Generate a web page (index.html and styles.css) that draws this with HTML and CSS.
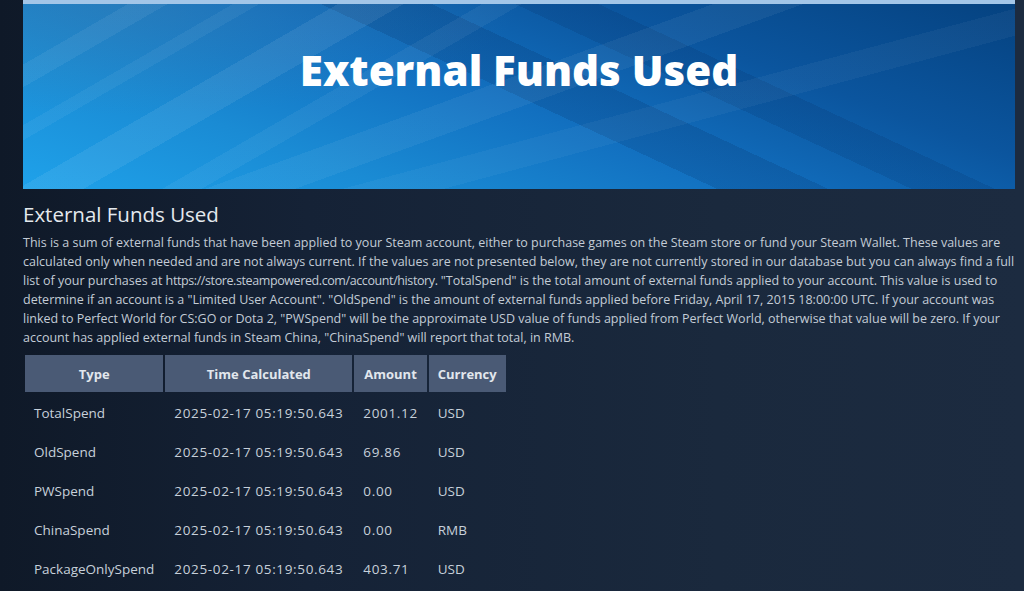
FILE: index.html
```html
<!DOCTYPE html>
<html lang="en">
<head>
  <meta charset="UTF-8">
  <meta name="viewport" content="width=device-width, initial-scale=1">
  <title>External Funds Used</title>
  <link rel="stylesheet" href="styles.css">
</head>
<body>

  <div class="page">
    <!-- Banner -->
    <div class="banner">
      <h1 class="banner-title">External Funds Used</h1>
    </div>

    <!-- Description -->
    <h2 class="section-title">External Funds Used</h2>
    <p class="section-desc">This is a sum of external funds that have been applied to your Steam account, either to purchase games on the Steam store or fund your Steam Wallet. These values are calculated only when needed and are not always current. If the values are not presented below, they are not currently stored in our database but you can always find a full list of your purchases at <span class="url">https://store.steampowered.com/account/history.</span> "TotalSpend" is the total amount of external funds applied to your account. This value is used to determine if an account is a "Limited User Account". "OldSpend" is the amount of external funds applied before Friday, April 17, 2015 18:00:00 UTC. If your account was linked to Perfect World for CS:GO or Dota 2, "PWSpend" will be the approximate USD value of funds applied from Perfect World, otherwise that value will be zero. If your account has applied external funds in Steam China, "ChinaSpend" will report that total, in RMB.</p>

    <!-- Tabel dana -->
    <table class="funds">
      <thead>
        <tr>
          <th>Type</th>
          <th>Time Calculated</th>
          <th>Amount</th>
          <th>Currency</th>
        </tr>
      </thead>
      <tbody>
        <tr><td>TotalSpend</td><td class="num">2025-02-17 05:19:50.643</td><td class="num">2001.12</td><td>USD</td></tr>
        <tr><td>OldSpend</td><td class="num">2025-02-17 05:19:50.643</td><td class="num">69.86</td><td>USD</td></tr>
        <tr><td>PWSpend</td><td class="num">2025-02-17 05:19:50.643</td><td class="num">0.00</td><td>USD</td></tr>
        <tr><td>ChinaSpend</td><td class="num">2025-02-17 05:19:50.643</td><td class="num">0.00</td><td>RMB</td></tr>
        <tr><td>PackageOnlySpend</td><td class="num">2025-02-17 05:19:50.643</td><td class="num">403.71</td><td>USD</td></tr>
      </tbody>
    </table>
  </div>

</body>
</html>
```

FILE: styles.css
```css
/* Reset dan Style Global */
* {
  margin: 0;
  padding: 0;
  box-sizing: border-box;
}
body {
  font-family: 'Open Sans', 'Noto Sans', sans-serif;
  background: linear-gradient(90deg, #0f1928 0%, #152236 30%, #1a293d 70%, #1c2b40 100%);
  color: #c6d0da;
  height: 100vh;
  overflow: hidden;
}
.page {
  width: 992px;
  margin-left: 23px;
}
/* Banner */
.banner {
  height: 189px;
  border-top: 4px solid #a3c6e8;
  padding-top: 45px;
  text-align: center;
  background:
    /* garis terang miring */
    linear-gradient(150deg, transparent 8%, rgba(255, 255, 255, 0.06) 8%, rgba(255, 255, 255, 0.06) 11%, transparent 11%),
    linear-gradient(150deg, transparent 16%, rgba(255, 255, 255, 0.05) 16%, rgba(255, 255, 255, 0.05) 18%, transparent 18%),
    linear-gradient(150deg, transparent 24%, rgba(255, 255, 255, 0.07) 24%, rgba(255, 255, 255, 0.07) 29%, transparent 29%),
    linear-gradient(150deg, transparent 35%, rgba(255, 255, 255, 0.05) 35%, rgba(255, 255, 255, 0.05) 38%, transparent 38%),
    linear-gradient(160deg, transparent 46%, rgba(255, 255, 255, 0.05) 46%, rgba(255, 255, 255, 0.05) 52%, transparent 52%),
    linear-gradient(165deg, transparent 60%, rgba(255, 255, 255, 0.04) 60%, rgba(255, 255, 255, 0.04) 66%, transparent 66%),
    /* pita gelap menurun */
    linear-gradient(25deg, transparent 50%, rgba(0, 25, 70, 0.14) 50%, rgba(0, 25, 70, 0.14) 58%, transparent 58%),
    linear-gradient(25deg, transparent 64%, rgba(0, 25, 70, 0.12) 64%, rgba(0, 25, 70, 0.12) 70%, transparent 70%),
    /* sudut kiri atas lebih pucat */
    radial-gradient(ellipse 40% 60% at 10% 0%, rgba(70, 130, 170, 0.35), transparent 100%),
    linear-gradient(20deg, #1fa2ea 0%, #1a8bd4 25%, #1270c0 48%, #0b559e 72%, #054280 100%);
}
.banner-title {
  font-family: 'Open Sans', 'Noto Sans', sans-serif;
  font-weight: 800;
  font-size: 42px;
  line-height: 42px;
  color: #ffffff;
}
/* Judul dan deskripsi */
.section-title {
  margin-top: 12px;
  font-size: 20.5px;
  line-height: 26px;
  font-weight: 400;
  color: #e4e9ee;
}
.section-desc {
  margin-top: 6px;
  font-size: 12.5px;
  line-height: 19px;
  color: #c3ccd6;
}
.section-desc .url {
  letter-spacing: -0.4px;
}
/* Tabel */
.funds {
  margin-top: 6px;
  border-collapse: separate;
  border-spacing: 2px;
  font-size: 13.5px;
}
.funds th {
  height: 37px;
  padding: 0 9px;
  background: #4a5a75;
  color: #e2e7ed;
  font-size: 13px;
  font-weight: 700;
  text-align: center;
}
.funds td {
  height: 37px;
  padding: 0 9px;
  color: #c7d0da;
  text-align: left;
  white-space: nowrap;
}
.funds td.num {
  letter-spacing: 0.65px;
}
```
